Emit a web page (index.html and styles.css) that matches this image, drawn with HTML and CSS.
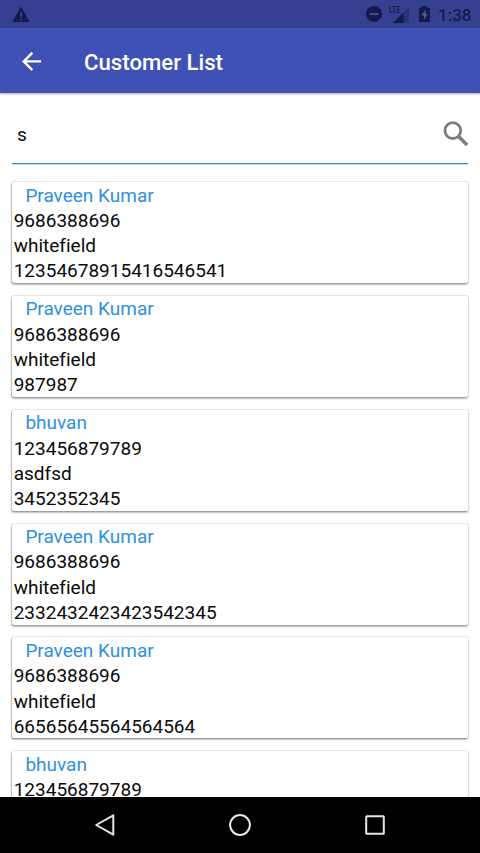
FILE: index.html
```html
<!DOCTYPE html>
<html lang="en">
<head>
<meta charset="utf-8">
<title>Customer List</title>
<link rel="stylesheet" href="styles.css">
</head>
<body>
<div class="screen">
  <header class="status">
    <svg class="warning" width="18" height="17" viewBox="0 0 18 17"><path d="M9 .5 17.7 16H.3Z" fill="currentColor"/><path d="M9 6v5M9 12.5v2" stroke="#354190" stroke-width="1.8"/></svg>
    <div class="status-right">
      <svg width="16" height="16" viewBox="0 0 16 16"><circle cx="8" cy="8" r="8" fill="currentColor"/><path d="M3.5 8h9" stroke="#4d579b" stroke-width="1.6"/></svg>
      <div class="signal"><span class="lte">LTE</span><svg width="16" height="16" viewBox="0 0 16 16"><path d="M16 0v16H0Z" fill="#2a3476"/><path d="M10.5 5.5V16H0Z" fill="currentColor"/></svg></div>
      <svg class="battery" width="11" height="16" viewBox="0 0 11 16"><path d="M3 0h5v1.7h3V16H0V1.7h3Z" fill="currentColor"/><path d="M6.5 3.5 2.5 9.5H5V14l3.7-6H6.5Z" fill="#4c5698"/></svg>
      <span class="time">1:38</span>
    </div>
  </header>
  <nav class="toolbar">
    <svg width="20" height="20" viewBox="0 0 20 20" fill="none" stroke="#fff" stroke-width="2.4"><path d="M19 9.4H2.5M10.3.8 1.7 9.4l8.6 8.6"/></svg>
    <h1>Customer List</h1>
  </nav>
  <main class="content">
    <div class="search">
      <span>s</span>
      <svg width="26" height="26" viewBox="0 0 26 26" fill="none" stroke="#7d7d7d"><circle cx="9.8" cy="9.6" r="7.9" stroke-width="2.8"/><path d="m15.7 15.5 8.4 8.4" stroke-width="3.6"/></svg>
    </div>
    <div class="list">
      <article class="card"><h2>Praveen Kumar</h2><p>9686388696</p><p>whitefield</p><p>12354678915416546541</p></article>
      <article class="card"><h2>Praveen Kumar</h2><p>9686388696</p><p>whitefield</p><p>987987</p></article>
      <article class="card"><h2>bhuvan</h2><p>123456879789</p><p>asdfsd</p><p>3452352345</p></article>
      <article class="card"><h2>Praveen Kumar</h2><p>9686388696</p><p>whitefield</p><p>2332432423423542345</p></article>
      <article class="card"><h2>Praveen Kumar</h2><p>9686388696</p><p>whitefield</p><p>66565645564564564</p></article>
      <article class="card"><h2>bhuvan</h2><p>123456879789</p></article>
    </div>
  </main>
  <footer class="navbar">
    <svg width="24" height="24" viewBox="0 0 24 24"><path d="M20.3 2.3v19.4L3.2 12Z"/></svg>
    <svg width="24" height="24" viewBox="0 0 24 24"><circle cx="12" cy="12" r="9.9"/></svg>
    <svg width="24" height="24" viewBox="0 0 24 24"><rect x="3.2" y="3.2" width="17.6" height="17.6" rx=".6"/></svg>
  </footer>
</div>
</body>
</html>
```
FILE: styles.css
```css
* { box-sizing: border-box; }
body, h1, h2, p { margin: 0; }
body {
  font-family: Roboto, "Liberation Sans", sans-serif;
  font-size: 19px;
  font-variant-ligatures: none;
  color: #0a0a0a;
  background: #fff;
}
svg { display: block; flex: none; }
.screen { display: flex; flex-direction: column; height: 853px; overflow: hidden; }
.status {
  display: flex; justify-content: space-between; flex: none;
  height: 28px; padding: 6px 10px 0 12px;
  background: #354190; color: #141b4c;
}
.status-right { display: flex; }
.signal { display: flex; width: 20px; margin: 0 10px 0 7px; }
.signal svg { margin: 1px 0 0 -8px; }
.lte { width: 12px; flex: none; font: 700 9.5px/8px Roboto, sans-serif; transform: scaleX(.75); transform-origin: left; height: 8px; white-space: nowrap; }
.time { width: 32px; margin-left: 8px; font-size: 17px; font-weight: 500; line-height: 18px; white-space: nowrap; }
.toolbar {
  display: flex; align-items: center; flex: none;
  height: 65px; padding: 3px 22px 0;
  background: #3f51b5; color: #fff;
  box-shadow: 0 1px 2px rgba(0, 0, 0, .35);
}
.toolbar h1 { margin-left: 42px; font-size: 22.2px; font-weight: 500; line-height: 28px; }
.content { flex: 1; min-height: 0; overflow: hidden; padding: 0 12px; }
.search {
  display: flex; justify-content: space-between; align-items: center;
  height: 71px; padding: 12px 0 0 5px;
  border-bottom: 1px solid #2f8fcb;
  box-shadow: 0 1px 0 rgba(47, 143, 203, .3);
}
.search svg { margin-right: -1px; }
.list { display: flex; flex-direction: column; gap: 12.85px; padding-top: 18px; }
.card {
  flex: none; height: 101px; padding: .6px 1.7px;
  line-height: 25.3px;
  border-radius: 2px; background: #fff;
  box-shadow: 0 0 1px 1px rgba(0, 0, 0, .1), 0 2px 2px rgba(0, 0, 0, .24), -1px 1px 1px rgba(0, 0, 0, .14);
}
.card h2 { margin-left: 11.7px; font: inherit; color: #3090e0; }
.navbar {
  display: flex; justify-content: center; align-items: center; gap: 111px; flex: none;
  height: 56px; background: #000;
}
.navbar svg { fill: none; stroke: #e6e6e6; stroke-width: 2; stroke-linejoin: round; }
```
